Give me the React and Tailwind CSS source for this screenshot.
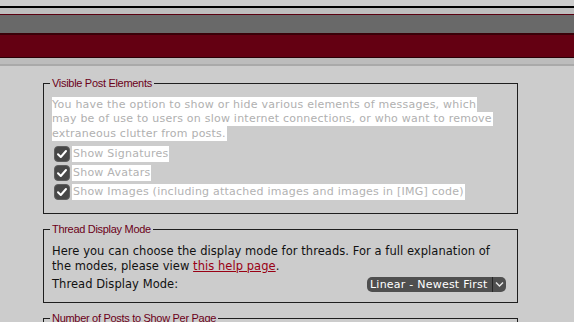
import React from 'react';

const font = { fontFamily: '"DejaVu Sans", Verdana, sans-serif' };
const legendFont = { fontFamily: '"Liberation Sans", Arial, sans-serif' };

const Check = ({ label }) => (
  <div className="flex items-center h-[19px]">
    <span className="ml-[2px] w-[16px] h-[16px] rounded-[4px] bg-[#474747] border border-[#5e5e5e] flex items-center justify-center">
      <svg width="12" height="12" viewBox="0 0 12 12">
        <path d="M2 6.2 L4.8 9 L10 3" fill="none" stroke="#ffffff" strokeWidth="2" strokeLinecap="round" strokeLinejoin="round" />
      </svg>
    </span>
    <span className="ml-[2px] bg-white text-[#b2b2b2] leading-[16px] px-[1px]">{label}</span>
  </div>
);

const Fieldset = ({ title, children, className = '' }) => (
  <fieldset className={`border border-[#1e1e1e] px-[8px] ${className}`}>
    <legend className="ml-[-2px] px-[2px] text-[#6b0018] leading-[14px] text-[11px] tracking-[-0.3px]" style={legendFont}>{title}</legend>
    {children}
  </fieldset>
);

export default function App() {
  return (
    <div className="w-[574px] h-[322px] overflow-hidden bg-[#cccccc] text-[11px] tracking-[0.23px]" style={font}>
      <div className="h-[6px] bg-[#cccccc]" />
      <div className="h-[2px] bg-black" />
      <div className="h-[6px] bg-[#bebebe]" />
      <div className="h-[1px] bg-[#5a0010]" />
      <div className="h-[18px] bg-[#696969]" />
      <div className="h-[2px] bg-[#3a0008]" />
      <div className="h-[22px] bg-[#640012]" />
      <div className="h-[1px] bg-[#2a0006]" />
      <div className="h-[6px] bg-[#bcbcbc]" />
      <div className="h-[2px] bg-[#a9a9a9]" />

      <div className="ml-[43px] w-[475px] mt-[10px] flex flex-col gap-[8px]">
        <Fieldset title="Visible Post Elements" className="pb-[12px]">
          <div className="mt-[7px] text-[#b0b0b0]">
            <div className="leading-[0]"><span className="inline-block bg-white leading-[15px] pr-[1px]">You have the option to show or hide various elements of messages, which</span></div>
            <div className="leading-[0]"><span className="inline-block bg-white leading-[14px] pr-[1px]">may be of use to users on slow internet connections, or who want to remove</span></div>
            <div className="leading-[0]"><span className="inline-block bg-white leading-[15px] pr-[1px]">extraneous clutter from posts.</span></div>
          </div>
          <div className="mt-[3px]">
            <Check label="Show Signatures" />
            <Check label="Show Avatars" />
            <Check label="Show Images (including attached images and images in [IMG] code)" />
          </div>
        </Fieldset>

        <Fieldset title="Thread Display Mode" className="pb-[10px]">
          <div className="mt-[8px] text-[#111] text-[11.5px] tracking-[0.05px] leading-[15px]">
            Here you can choose the display mode for threads. For a full explanation of the modes, please view{' '}
            <a href="#" className="text-[#990014] underline">this help page</a>.
          </div>
          <div className="mt-[3px] flex items-center justify-between text-[#111] leading-[15px]">
            <span className="text-[11.5px] tracking-[0.05px]">Thread Display Mode:</span>
            <span className="mr-[3px] flex items-center h-[15px] w-[139px] rounded-[5px] bg-[#4f4f4f] text-white overflow-hidden">
              <span className="flex-1 pl-[3px] leading-[15px] whitespace-nowrap">Linear - Newest First</span>
              <span className="w-[1px] h-full bg-[#262626]" />
              <span className="w-[13px] flex items-center justify-center">
                <svg width="9" height="7" viewBox="0 0 9 7">
                  <path d="M1 1.5 L4.5 5 L8 1.5" fill="none" stroke="#e8e8e8" strokeWidth="1.4" />
                </svg>
              </span>
            </span>
          </div>
        </Fieldset>

        <Fieldset title="Number of Posts to Show Per Page" className="pb-[20px]">
          <div className="mt-[8px] text-[#111] leading-[15px]">&nbsp;</div>
        </Fieldset>
      </div>
    </div>
  );
}
